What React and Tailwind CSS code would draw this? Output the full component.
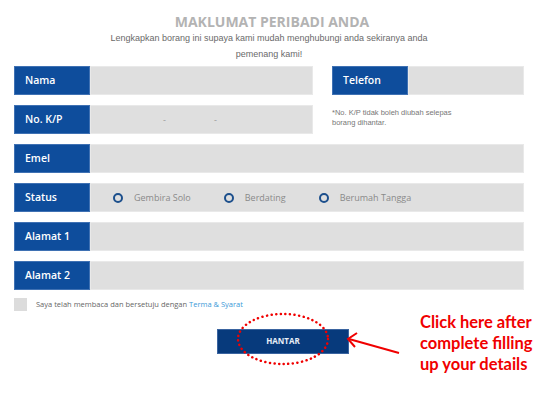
import React from 'react'

function Label({ children, className = '' }) {
  return (
    <div className={`w-[76px] h-full shrink-0 bg-[#0e4d9c] border border-[#3f71b3] flex items-center pl-[10px] text-white text-[10.5px] font-semibold ${className}`}>
      {children}
    </div>
  )
}

function Row({ label, children }) {
  return (
    <div className="flex h-[29px] w-[510px]">
      <Label>{label}</Label>
      <div className="flex-1 h-full bg-[#dfdfdf] border border-[#e9e9e9] flex items-center">{children}</div>
    </div>
  )
}

function Radio({ text }) {
  return (
    <div className="flex items-center gap-[11px]">
      <span className="w-[10px] h-[10px] rounded-full border-2 border-[#1c4f8c]"></span>
      <span className="text-[9px] text-[#8a8a8a]">{text}</span>
    </div>
  )
}

export default function App() {
  return (
    <div className="relative w-[550px] h-[394px] bg-white overflow-hidden" style={{ fontFamily: '"Open Sans", sans-serif' }}>
      <div className="flex flex-col pl-[14px] pt-[14px]">
        <div className="w-[510px] flex flex-col items-center">
          <h1 className="text-[14px] leading-[16px] font-bold text-[#b3b3b3] pl-[6px]">MAKLUMAT PERIBADI ANDA</h1>
          <p className="text-[9px] leading-[16px] text-[#6a6a6a] text-center" style={{ fontFamily: '"Liberation Sans", Arial, sans-serif' }}>
            Lengkapkan borang ini supaya kami mudah menghubungi anda sekiranya anda<br />pemenang kami!
          </p>
        </div>

        <div className="flex flex-col gap-[10px] mt-[4px]">
          <div className="flex h-[29px] w-[510px] gap-[19px]">
            <div className="flex w-[299px] h-full">
              <Label>Nama</Label>
              <div className="flex-1 h-full bg-[#dfdfdf] border border-[#e9e9e9]"></div>
            </div>
            <div className="flex flex-1 h-full">
              <Label>Telefon</Label>
              <div className="flex-1 h-full bg-[#dfdfdf] border border-[#e9e9e9]"></div>
            </div>
          </div>

          <div className="flex h-[29px] w-[510px] gap-[19px]">
            <div className="flex w-[299px] h-full">
              <Label>No. K/P</Label>
              <div className="flex-1 h-full bg-[#dfdfdf] border border-[#e9e9e9] flex items-center text-[9px] text-[#9a9a9a]">
                <span className="ml-[72px]">-</span>
                <span className="ml-[48px]">-</span>
              </div>
            </div>
            <p className="text-[7.5px] leading-[10px] text-[#777] pt-[3px]" style={{ fontFamily: '"Liberation Sans", Arial, sans-serif' }}>
              *No. K/P tidak boleh diubah selepas<br />borang dihantar.
            </p>
          </div>

          <Row label="Emel" />
          <Row label="Status">
            <div className="flex items-center gap-[33px] pl-[22px]">
              <Radio text="Gembira Solo" />
              <Radio text="Berdating" />
              <Radio text="Berumah Tangga" />
            </div>
          </Row>
          <Row label="Alamat 1" />
          <Row label="Alamat 2" />
        </div>

        <div className="flex items-center mt-[8px] h-[13px]">
          <span className="w-[13px] h-[13px] bg-[#dcdcdc]"></span>
          <span className="ml-[9px] text-[7.5px] text-[#666]">
            Saya telah membaca dan bersetuju dengan <span className="text-[#3b9ad8]">Terma &amp; Syarat</span>
          </span>
        </div>

        <div className="mt-[15px] ml-[203px]">
          <button className="w-[132px] h-[25px] bg-[#073a7c] border border-[#3a64a0] text-[#e8eef7] text-[8px] font-bold">
            HANTAR
          </button>
        </div>
      </div>

      <svg className="absolute inset-0 pointer-events-none" width="550" height="394">
        <ellipse cx="283" cy="339" rx="45" ry="25" fill="none" stroke="#f00000" strokeWidth="2.5" strokeDasharray="0.1 4.5" strokeLinecap="round" />
        <line x1="399" y1="353" x2="349" y2="339" stroke="#f00000" strokeWidth="2" />
        <polyline points="357,333 348,339 355,347" fill="none" stroke="#f00000" strokeWidth="2" />
      </svg>

      <div className="absolute left-[420px] top-[312px] text-[#f00000] text-[16.5px] leading-[21px] font-bold" style={{ fontFamily: 'Lato, "Open Sans", sans-serif' }}>
        Click here after<br />complete filling<br />up your details
      </div>
    </div>
  )
}
